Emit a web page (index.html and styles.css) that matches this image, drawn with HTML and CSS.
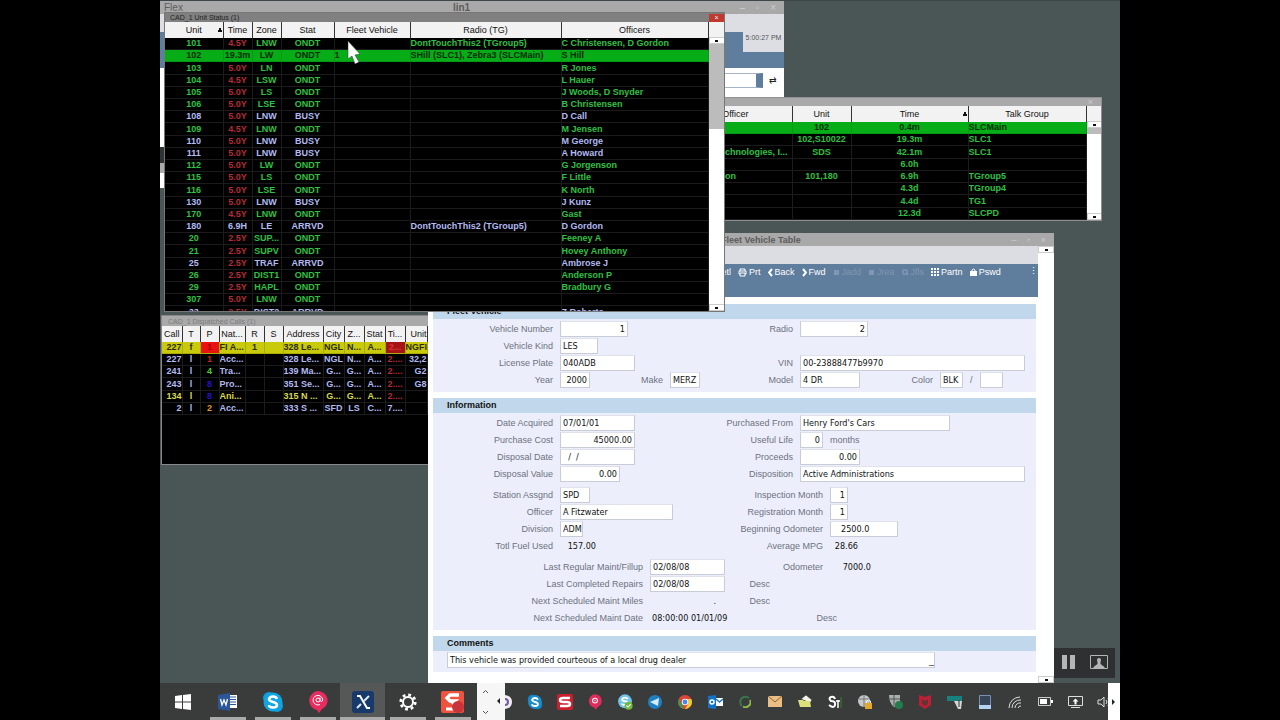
FILE: index.html
```html
<!DOCTYPE html>
<html lang="en">
<head>
    <meta charset="UTF-8">
    <meta name="viewport" content="width=device-width, initial-scale=1.0">
    <title>Flex - Fleet Vehicle Table</title>
    <link rel="stylesheet" href="styles.css">
</head>
<body>
    <div class="screen">
        <main class="desktop">

            <!-- Flex launcher -->
            <section class="window flex-window">
                <div class="titlebar">
                    <span>Flex</span>
                    <strong>lin1</strong>
                    <span class="win-buttons">– ▫ ×</span>
                </div>
                <div class="launcher-top"><span class="clock">5:00:27 PM</span></div>
                <div class="launcher-bar">
                    <select class="command" aria-label="Command"><option></option></select>
                    <span class="refresh">⇄</span>
                </div>
            </section>

            <!-- Radio log -->
            <section class="window radio-window">
                <div class="titlebar"><span class="win-buttons">×</span></div>
                <div class="list">
                    <table class="radio-table">
                        <thead>
                            <tr><th class="w-officer">Officer</th><th class="w-unit">Unit</th><th class="w-time sorted">Time</th><th class="w-group">Talk Group</th></tr>
                        </thead>
                        <tbody>
                            <tr class="selected"><td></td><td>102</td><td>0.4m</td><td class="left">SLCMain</td></tr>
                            <tr><td></td><td>102,S10022</td><td>19.3m</td><td class="left">SLC1</td></tr>
                            <tr><td class="left">chnologies, I...</td><td>SDS</td><td>42.1m</td><td class="left">SLC1</td></tr>
                            <tr><td></td><td></td><td>6.0h</td><td></td></tr>
                            <tr><td class="left">on</td><td>101,180</td><td>6.9h</td><td class="left">TGroup5</td></tr>
                            <tr><td></td><td></td><td>4.3d</td><td class="left">TGroup4</td></tr>
                            <tr><td></td><td></td><td>4.4d</td><td class="left">TG1</td></tr>
                            <tr><td></td><td></td><td>12.3d</td><td class="left">SLCPD</td></tr>
                        </tbody>
                    </table>
                    <div class="scrollbar headed"><i class="arrow up"></i><b class="thumb short"></b><i class="arrow down"></i></div>
                </div>
            </section>

            <!-- Dispatched calls -->
            <section class="window calls-window">
                <div class="titlebar"><span>CAD_1 Dispatched Calls (1)</span></div>
                <div class="list">
                    <table class="calls-table">
                        <thead>
                            <tr><th class="c20">Call</th><th class="c18">T</th><th class="c19">P</th><th class="c26">Nat...</th><th class="c19">R</th><th class="c19">S</th><th class="c40">Address</th><th class="c21">City</th><th class="c20">Z...</th><th class="c21">Stat</th><th class="c20">Ti...</th><th class="c22 right">Unit</th></tr>
                        </thead>
                        <tbody>
                            <tr class="fire"><td class="right">227</td><td>f</td><td class="alarm">1</td><td class="left">FI A...</td><td>1</td><td></td><td class="left">328 Le...</td><td>NGL</td><td>N...</td><td>A...</td><td class="late">2...</td><td class="left">NGFI</td></tr>
                            <tr class="busy"><td class="right">227</td><td>l</td><td class="p1">1</td><td class="left">Acc...</td><td></td><td></td><td class="left">328 Le...</td><td>NGL</td><td>N...</td><td>A...</td><td class="old">2....</td><td class="right">32,2</td></tr>
                            <tr class="busy"><td class="right">241</td><td>l</td><td class="p4">4</td><td class="left">Tra...</td><td></td><td></td><td class="left">139 Ma...</td><td>G...</td><td>G...</td><td>A...</td><td class="old">2....</td><td class="right">G2</td></tr>
                            <tr class="busy"><td class="right">243</td><td>l</td><td class="p8">8</td><td class="left">Pro...</td><td></td><td></td><td class="left">351 Se...</td><td>G...</td><td>G...</td><td>A...</td><td class="old">2....</td><td class="right">G8</td></tr>
                            <tr class="animal"><td class="right">134</td><td>l</td><td class="p8">8</td><td class="left">Ani...</td><td></td><td></td><td class="left">315 N ...</td><td>G...</td><td>G...</td><td>A...</td><td class="old">2....</td><td></td></tr>
                            <tr class="busy"><td class="right">2</td><td>l</td><td class="p2">2</td><td class="left">Acc...</td><td></td><td></td><td class="left">333 S ...</td><td>SFD</td><td>LS</td><td>C...</td><td>7....</td><td></td></tr>
                        </tbody>
                    </table>
                </div>
            </section>

            <!-- Fleet vehicle form -->
            <section class="window fleet-window">
                <div class="titlebar">
                    <strong>Fleet Vehicle Table</strong>
                    <span class="win-buttons">– ▫ ×</span>
                </div>
                <div class="fleet-main">
                    <div class="fleet-page">
                        <div class="menu-strip"></div>
                        <div class="toolbar">
                            <button>Detl</button>
                            <button><svg width="9" height="9" viewBox="0 0 9 9" fill="none" stroke="#fff"><path d="M2 3V1h5v2M2 6H1V3h7v3H7M2 5h5v3H2z"/></svg>Prt</button>
                            <button><svg width="5" height="9" viewBox="0 0 5 9" fill="none" stroke="#fff" stroke-width="2"><path d="M4 1L1 4.500L4 8"/></svg>Back</button>
                            <button><svg width="5" height="9" viewBox="0 0 5 9" fill="none" stroke="#fff" stroke-width="2"><path d="M1 1l3 3.500L1 8"/></svg>Fwd</button>
                            <button disabled><svg width="7" height="7" viewBox="0 0 7 7"><path d="M1 1h5v5H1z"/></svg>Jadd</button>
                            <button disabled><svg width="7" height="7" viewBox="0 0 7 7"><path d="M1 1h5v5H1z"/></svg>Jrea</button>
                            <button disabled><svg width="7" height="7" viewBox="0 0 7 7" fill="none" stroke="#8fa3bb"><path d="M1 1h4v4H1zM5 5l1 1"/></svg>Jfls</button>
                            <button><svg width="8" height="8" viewBox="0 0 8 8" fill="#fff"><path d="M0 0h2v2H0zM3 0h2v2H3zM6 0h2v2H6zM0 3h2v2H0zM3 3h2v2H3zM6 3h2v2H6zM0 6h2v2H0zM3 6h2v2H3zM6 6h2v2H6z"/></svg>Partn</button>
                            <button><svg width="7" height="8" viewBox="0 0 7 8"><path d="M2 4V2q1.500-2 3 0v2" fill="none" stroke="#fff"/><path d="M0 3h7v5H0z" fill="#fff"/></svg>Pswd</button>
                            <span class="more">⋮</span>
                        </div>

                        <form class="form">
                            <fieldset>
                                <h2>Fleet Vehicle</h2>
                                <div class="fields">
                                    <div class="row">
                                        <label for="number">Vehicle Number</label><input id="number" class="w68 num" value="1">
                                    </div>
                                    <div class="row">
                                        <label for="radio">Radio</label><input id="radio" class="w68 num" value="2">
                                    </div>
                                    <div class="row">
                                        <label for="kind">Vehicle Kind</label><input id="kind" class="w38" value="LES">
                                    </div>
                                    <div class="row"></div>
                                    <div class="row">
                                        <label for="plate">License Plate</label><input id="plate" class="w75" value="040ADB">
                                    </div>
                                    <div class="row">
                                        <label for="vin">VIN</label><input id="vin" class="w225" value="00-23888477b9970">
                                    </div>
                                    <div class="row">
                                        <label for="year">Year</label><input id="year" class="w30 num" value="2000">
                                        <label for="make" class="inner">Make</label><input id="make" class="w30" value="MERZ">
                                    </div>
                                    <div class="row">
                                        <label for="model">Model</label><input id="model" class="w60" value="4 DR">
                                        <label for="color" class="inner">Color</label><input id="color" class="w23" value="BLK">
                                        <span class="unit">/</span><input class="w23" aria-label="Second color" value="">
                                    </div>
                                </div>
                            </fieldset>

                            <fieldset>
                                <h2>Information</h2>
                                <div class="fields">
                                    <div class="row">
                                        <label for="acquired">Date Acquired</label><input id="acquired" class="w75" value="07/01/01">
                                    </div>
                                    <div class="row">
                                        <label for="from">Purchased From</label><input id="from" class="w150" value="Henry Ford's Cars">
                                    </div>
                                    <div class="row">
                                        <label for="cost">Purchase Cost</label><input id="cost" class="w75 num" value="45000.00">
                                    </div>
                                    <div class="row">
                                        <label for="life">Useful Life</label><input id="life" class="w23 num" value="0"><span class="unit">months</span>
                                    </div>
                                    <div class="row">
                                        <label for="disposal">Disposal Date</label><input id="disposal" class="w75" value="  /  /">
                                    </div>
                                    <div class="row">
                                        <label for="proceeds">Proceeds</label><input id="proceeds" class="w60 num" value="0.00">
                                    </div>
                                    <div class="row">
                                        <label for="dvalue">Disposal Value</label><input id="dvalue" class="w60 num" value="0.00">
                                    </div>
                                    <div class="row">
                                        <label for="disposition">Disposition</label><input id="disposition" class="w225" value="Active Administrations">
                                    </div>
                                </div>
                                <div class="fields months">
                                    <div class="row">
                                        <label for="station">Station Assgnd</label><input id="station" class="w30" value="SPD">
                                    </div>
                                    <div class="row">
                                        <label for="inspection">Inspection Month</label><input id="inspection" class="w18 num" value="1">
                                    </div>
                                    <div class="row">
                                        <label for="officer">Officer</label><input id="officer" class="w113" value="A Fitzwater">
                                    </div>
                                    <div class="row">
                                        <label for="registration">Registration Month</label><input id="registration" class="w18 num" value="1">
                                    </div>
                                    <div class="row">
                                        <label for="division">Division</label><input id="division" class="w23" value="ADM">
                                    </div>
                                    <div class="row">
                                        <label for="begin">Beginning Odometer</label><input id="begin" class="w68 indent" value="2500.0">
                                    </div>
                                    <div class="row">
                                        <label for="fuel">Totl Fuel Used</label><output id="fuel" class="w38 num">157.00</output>
                                    </div>
                                    <div class="row">
                                        <label for="mpg">Average MPG</label><output id="mpg" class="w30 num">28.66</output>
                                    </div>
                                </div>
                                <div class="fields maint">
                                    <div class="row">
                                        <label for="fillup">Last Regular Maint/Fillup</label><input id="fillup" class="w75" value="02/08/08">
                                    </div>
                                    <div class="row">
                                        <label for="odometer">Odometer</label><output id="odometer" class="w43 num">7000.0</output>
                                    </div>
                                    <div class="row">
                                        <label for="repairs">Last Completed Repairs</label><input id="repairs" class="w75" value="02/08/08">
                                    </div>
                                    <div class="row desc"><label>Desc</label></div>
                                    <div class="row">
                                        <label for="miles">Next Scheduled Maint Miles</label><output id="miles" class="w68 num">.</output>
                                    </div>
                                    <div class="row desc"><label>Desc</label></div>
                                    <div class="row">
                                        <label for="next">Next Scheduled Maint Date</label><output id="next">08:00:00 01/01/09</output>
                                    </div>
                                    <div class="row desc-far"><label>Desc</label></div>
                                </div>
                            </fieldset>

                            <fieldset>
                                <h2>Comments</h2>
                                <div class="comment">
                                    <input aria-label="Comments" value="This vehicle was provided courteous of a local drug dealer">
                                    <span>_</span>
                                </div>
                            </fieldset>
                        </form>
                    </div>
                    <div class="scrollbar"><i class="arrow up"></i><i class="arrow down"></i></div>
                </div>
            </section>

            <!-- Unit status -->
            <section class="window unit-window">
                <div class="titlebar"><span>CAD_1 Unit Status (1)</span><button class="close" aria-label="Close">×</button></div>
                <div class="list">
                    <table class="unit-table">
                        <thead>
                            <tr><th class="u-unit sorted">Unit</th><th class="u-time">Time</th><th class="u-zone">Zone</th><th class="u-stat">Stat</th><th class="u-fleet">Fleet Vehicle</th><th class="u-radio">Radio (TG)</th><th class="u-officers">Officers</th></tr>
                        </thead>
                        <tbody>
                            <tr><td>101</td><td class="old">4.5Y</td><td>LNW</td><td>ONDT</td><td></td><td class="left">DontTouchThis2 (TGroup5)</td><td class="left">C Christensen, D Gordon</td></tr>
                            <tr class="selected"><td>102</td><td>19.3m</td><td>LW</td><td>ONDT</td><td class="left">1</td><td class="left">SHill (SLC1), Zebra3 (SLCMain)</td><td class="left">S Hill</td></tr>
                            <tr><td>103</td><td class="old">5.0Y</td><td>LN</td><td>ONDT</td><td></td><td></td><td class="left">R Jones</td></tr>
                            <tr><td>104</td><td class="old">4.5Y</td><td>LSW</td><td>ONDT</td><td></td><td></td><td class="left">L Hauer</td></tr>
                            <tr><td>105</td><td class="old">5.0Y</td><td>LS</td><td>ONDT</td><td></td><td></td><td class="left">J Woods, D Snyder</td></tr>
                            <tr><td>106</td><td class="old">5.0Y</td><td>LSE</td><td>ONDT</td><td></td><td></td><td class="left">B Christensen</td></tr>
                            <tr class="busy"><td>108</td><td class="old">5.0Y</td><td>LNW</td><td>BUSY</td><td></td><td></td><td class="left">D Call</td></tr>
                            <tr><td>109</td><td class="old">4.5Y</td><td>LNW</td><td>ONDT</td><td></td><td></td><td class="left">M Jensen</td></tr>
                            <tr class="busy"><td>110</td><td class="old">5.0Y</td><td>LNW</td><td>BUSY</td><td></td><td></td><td class="left">M George</td></tr>
                            <tr class="busy"><td>111</td><td class="old">5.0Y</td><td>LNW</td><td>BUSY</td><td></td><td></td><td class="left">A Howard</td></tr>
                            <tr><td>112</td><td class="old">5.0Y</td><td>LW</td><td>ONDT</td><td></td><td></td><td class="left">G Jorgenson</td></tr>
                            <tr><td>115</td><td class="old">5.0Y</td><td>LS</td><td>ONDT</td><td></td><td></td><td class="left">F Little</td></tr>
                            <tr><td>116</td><td class="old">5.0Y</td><td>LSE</td><td>ONDT</td><td></td><td></td><td class="left">K North</td></tr>
                            <tr class="busy"><td>130</td><td class="old">5.0Y</td><td>LNW</td><td>BUSY</td><td></td><td></td><td class="left">J Kunz</td></tr>
                            <tr><td>170</td><td class="old">4.5Y</td><td>LNW</td><td>ONDT</td><td></td><td></td><td class="left">Gast</td></tr>
                            <tr class="busy"><td>180</td><td>6.9H</td><td>LE</td><td>ARRVD</td><td></td><td class="left">DontTouchThis2 (TGroup5)</td><td class="left">D Gordon</td></tr>
                            <tr><td>20</td><td class="old">2.5Y</td><td>SUP...</td><td>ONDT</td><td></td><td></td><td class="left">Feeney A</td></tr>
                            <tr><td>21</td><td class="old">2.5Y</td><td>SUPV</td><td>ONDT</td><td></td><td></td><td class="left">Hovey Anthony</td></tr>
                            <tr class="busy"><td>25</td><td class="old">2.5Y</td><td>TRAF</td><td>ARRVD</td><td></td><td></td><td class="left">Ambrose J</td></tr>
                            <tr><td>26</td><td class="old">2.5Y</td><td>DIST1</td><td>ONDT</td><td></td><td></td><td class="left">Anderson P</td></tr>
                            <tr><td>29</td><td class="old">2.5Y</td><td>HAPL</td><td>ONDT</td><td></td><td></td><td class="left">Bradbury G</td></tr>
                            <tr><td>307</td><td class="old">5.0Y</td><td>LNW</td><td>ONDT</td><td></td><td></td><td></td></tr>
                            <tr class="busy"><td>33</td><td class="old">2.5Y</td><td>DIST2</td><td>ARRVD</td><td></td><td></td><td class="left">Z Roberts</td></tr>
                        </tbody>
                    </table>
                    <div class="scrollbar headed"><i class="arrow up"></i><b class="thumb"></b><i class="arrow down"></i></div>
                </div>
            </section>

            <svg class="cursor" width="14" height="24" viewBox="0 0 14 24"><path d="M1 0v18l4-3 3 8 4-2-4-7 5-1z" fill="#fff" stroke="#333" stroke-width=".5"/></svg>

            <div class="recorder">
                <button aria-label="Pause"><svg width="14" height="14" viewBox="0 0 14 14" fill="#b5b5b5"><path d="M0 0h5v14H0zM8 0h5v14H8z"/></svg></button>
                <button aria-label="Presenter"><svg width="18" height="14" viewBox="0 0 18 14"><path d="M.5.5h17v13H.5z" fill="none" stroke="#b5b5b5"/><circle cx="9" cy="5" r="2" fill="#b5b5b5"/><path d="M7.500 5h3v4l4 3v1h-11v-1l4-3z" fill="#b5b5b5"/></svg></button>
            </div>
        </main>

        <footer class="taskbar">
            <nav class="apps">
                <button aria-label="Start"><svg width="16" height="16" viewBox="0 0 16 16" fill="#fff"><path d="M0 2l7-1v6.500H0zM8 1l8-1v7.500H8zM0 8.500h7V15l-7-1zM8 8.500h8V16l-8-1z"/></svg></button>
                <button class="open" aria-label="Word"><svg width="20" height="18" viewBox="0 0 20 18"><path d="M10 2h9v13h-9z" fill="#fff"/><path d="M12 4h6M12 6.500h6M12 9h6M12 11.500h6" stroke="#2b579a"/><path d="M0 2l12-2v18L0 16z" fill="#2b579a"/><path d="M2.500 6l1.500 6 2-5 2 5 1.500-6" fill="none" stroke="#fff" stroke-width="1.300"/></svg></button>
                <button class="open" aria-label="Skype"><svg width="22" height="22" viewBox="0 0 22 22"><circle cx="7" cy="7" r="6" fill="#0d9ddb"/><circle cx="15" cy="15" r="6" fill="#0d9ddb"/><circle cx="11" cy="11" r="9.500" fill="#12a5e3"/><path d="M15 8q-1-2.500-4-2.500T7 8q0 2 4 3t4 3q0 2.500-4 2.500T7 14" fill="none" stroke="#fff" stroke-width="2.500"/></svg></button>
                <button class="open" aria-label="Messages"><svg width="20" height="22" viewBox="0 0 20 22"><path d="M10 0a10 9.500 0 0 1 4 18l-3 4-2-3a9.600 9.600 0 0 1 1-19z" fill="#e92c60"/><circle cx="10" cy="9" r="2" fill="none" stroke="#fff"/><path d="M12 6.500v3q2 2.500 2.700-.5A4.800 4.800 0 1 0 12 13.500" fill="none" stroke="#fff"/></svg></button>
                <button class="open active" aria-label="Flex"><svg width="22" height="22" viewBox="0 0 22 22"><rect width="22" height="22" rx="3" fill="#173a6b"/><path d="M5 5h3l7 12h3" fill="none" stroke="#fff" stroke-width="2"/><path d="M17 5l-5 5M9 13l-4 4" stroke="#dfe8f2" stroke-width="2"/></svg></button>
                <button class="open" aria-label="Settings"><svg width="18" height="18" viewBox="0 0 18 18" fill="none" stroke="#fff"><circle cx="9" cy="9" r="5" stroke-width="2"/><circle cx="9" cy="9" r="7.200" stroke-width="2.800" stroke-dasharray="2.830 2.825"/></svg></button>
                <button class="open" aria-label="Recorder"><svg width="24" height="22" viewBox="0 0 24 22"><rect width="23" height="22" rx="2" fill="#ee5340"/><path d="M18 4H9L6 7l3 3h5l-3 3" fill="none" stroke="#fff" stroke-width="3.500"/><path d="M5 18h7" stroke="#fff" stroke-width="3"/><circle cx="17" cy="16" r="6" fill="#c9343a"/></svg></button>
            </nav>
            <div class="spinner">
                <svg width="28" height="37" viewBox="0 0 28 37" fill="none" stroke="#555"><path d="M6 10l2.500-2.500L11 10M6 28l2.500 2.500L11 28"/><path d="M23 15v6l-3-3z" fill="#222" stroke="none"/></svg>
            </div>
            <div class="tray">
                <span class="half"><svg width="8" height="16" viewBox="0 0 8 16"><path d="M0 1q7 1 7 7t-7 7z" fill="#eee"/><path d="M0 5q3 0 3 3t-3 3" fill="none" stroke="#7758a5" stroke-width="2"/></svg></span>
                <span><svg width="16" height="16" viewBox="0 0 22 22"><circle cx="7" cy="7" r="6" fill="#1280c4"/><circle cx="15" cy="15" r="6" fill="#1280c4"/><circle cx="11" cy="11" r="9.500" fill="#1a8dcc"/><path d="M15 8q-1-2.500-4-2.500T7 8q0 2 4 3t4 3q0 2.500-4 2.500T7 14" fill="none" stroke="#fff" stroke-width="2.500"/></svg></span>
                <span><svg width="16" height="16" viewBox="0 0 16 16"><rect width="16" height="16" rx="2" fill="#c8202f"/><path d="M13 4H6Q3 4 3 6t3 2h4q3 0 3 2t-3 2H3" fill="none" stroke="#fff" stroke-width="2.500"/></svg></span>
                <span><svg width="14" height="16" viewBox="0 0 20 22"><path d="M10 0a10 9.500 0 0 1 4 18l-3 4-2-3a9.600 9.600 0 0 1 1-19z" fill="#e02c5c"/><circle cx="10" cy="9" r="3.500" fill="none" stroke="#fff" stroke-width="1.500"/><circle cx="10" cy="9" r="1" fill="#fff"/></svg></span>
                <span><svg width="16" height="16" viewBox="0 0 22 22"><circle cx="11" cy="10" r="9.500" fill="#6fc5ea"/><path d="M15 7q-1-2-4-2T7 7.500q0 2 4 2.500t4 3q0 2-4 2t-4-2" fill="none" stroke="#fff" stroke-width="2.500"/><circle cx="16" cy="16" r="5.500" fill="#72b83d"/><path d="M13 16l2 2 4-4" fill="none" stroke="#fff" stroke-width="1.500"/></svg></span>
                <span><svg width="14" height="14" viewBox="0 0 14 14"><circle cx="7" cy="7" r="7" fill="#1e7fc2"/><path d="M2 7l9-4-1 8z" fill="#d5eafa"/></svg></span>
                <span><svg width="14" height="14" viewBox="0 0 14 14"><circle cx="7" cy="7" r="7" fill="#dd4538"/><path d="M1 4l5 10A7 7 0 0 1 1 4z" fill="#31a14f"/><path d="M7 4h6.300A7 7 0 0 1 7 14l3-5z" fill="#f6c92e"/><circle cx="7" cy="7" r="3.200" fill="#fff"/><circle cx="7" cy="7" r="2.400" fill="#4285f4"/></svg></span>
                <span><svg width="15" height="14" viewBox="0 0 15 14"><path d="M7 3h8v8H7z" fill="#fff"/><path d="M8 4l3.500 3L15 4" fill="none" stroke="#1979ca" stroke-width="1.500"/><path d="M0 1l8-1v14l-8-1z" fill="#1272c4"/><circle cx="4" cy="7" r="2" fill="none" stroke="#fff" stroke-width="1.500"/></svg></span>
                <span><svg width="12" height="13" viewBox="0 0 12 13" fill="none" stroke-width="2"><path d="M10 3A5 5 0 1 0 3 11" stroke="#39774b"/><path d="M4 11.500A5 5 0 0 0 11 5" stroke="#8eb84a"/></svg></span>
                <span><svg width="14" height="11" viewBox="0 0 14 11"><path d="M0 0h14v11H0z" fill="#e9bd83"/><path d="M0 0l7 6 7-6" fill="none" stroke="#8c6435"/></svg></span>
                <span><svg width="15" height="13" viewBox="0 0 15 13"><path d="M3 4l5-4 6 5-2 3z" fill="#f2f2e6" stroke="#222" stroke-width=".5"/><path d="M0 5h5l1 1h6l1 6H2z" fill="#dce07a"/></svg></span>
                <span><svg width="14" height="15" viewBox="0 0 14 15" fill="none"><path d="M7 5q-1-3-4-2T3 7q5 0 4 4t-6 0" stroke="#fff" stroke-width="2"/><path d="M10 6v8M8 7h4" stroke="#fff" stroke-width="1.500"/><path d="M13 3v11" stroke="#387d32"/></svg></span>
                <span><svg width="14" height="14" viewBox="0 0 14 14"><circle cx="6" cy="6" r="6" fill="#c5c8c8"/><path d="M6 0v12M1 4h10" stroke="#777"/><path d="M7 8h7v6H7z" fill="#e2a82c"/><path d="M8.500 8V6q2-2 4 0v2" fill="none" stroke="#eee"/></svg></span>
                <span><svg width="15" height="15" viewBox="0 0 15 15"><path d="M1 1h11v7q-2 4-6 5Q1 9 1 1z" fill="#aab0ae"/><path d="M6 1v11M1 5h11" stroke="#555"/><circle cx="11" cy="11" r="4" fill="#237c4c"/></svg></span>
                <span><svg width="14" height="15" viewBox="0 0 14 15"><path d="M1 1l6 2 6-2v10l-6 4-6-4z" fill="#bf1f34"/><path d="M4 5l3 2 3-2v5l-3 2-3-2z" fill="#633"/></svg></span>
                <span><svg width="16" height="14" viewBox="0 0 16 14"><path d="M0 1h15v5H0z" fill="#16817d"/><path d="M7 6h8l-1 8h-3z" fill="#d4d8d8"/><path d="M12 5v7" stroke="#333"/></svg></span>
                <span><svg width="12" height="14" viewBox="0 0 12 14"><path d="M.5.5h11v13H.5z" fill="#39465a" stroke="#7891b1"/><path d="M0 10h12v4H0z" fill="#b6d2f3"/></svg></span>
                <span><svg width="14" height="14" viewBox="0 0 14 14" fill="none" stroke="#ddd"><path d="M1 13A11 11 0 0 1 12 2M4 13a8 8 0 0 1 9-8M7 13a5 5 0 0 1 6-5M10 13a3 3 0 0 1 3-2"/></svg></span>
                <span><svg width="15" height="9" viewBox="0 0 15 9"><path d="M.5.5h12v8H.5z" fill="none" stroke="#ccc"/><path d="M2 2h7v5H2zM13 3h2v3h-2z" fill="#fff"/></svg></span>
                <span><svg width="15" height="12" viewBox="0 0 15 12"><path d="M.5.5h14v9H.5zM3 11.500h9" fill="none" stroke="#ddd"/><path d="M7.500 2.500l3 3h-2v3h-2v-3h-2z" fill="#fff"/></svg></span>
                <span><svg width="16" height="12" viewBox="0 0 16 12" fill="none" stroke="#ddd"><path d="M1 4h3l3-3v10L4 8H1zM9 4q2 2 0 4M11 2q3 4 0 8"/></svg></span>
            </div>
            <div class="tray-end"><svg width="5" height="8" viewBox="0 0 5 8"><path d="M1 1v6l3-3z" fill="#222"/></svg></div>
        </footer>
    </div>
</body>
</html>
```

FILE: styles.css
```css
* {
    box-sizing: border-box;
}
body {
    margin: 0;
    background-color: #000;
    font-family: "Liberation Sans", Arial, sans-serif;
    font-size: 9px;
    color: #222;
}
button {
    font: inherit;
    border: none;
    background: none;
    padding: 0;
}
.screen {
    display: flex;
    flex-direction: column;
    width: 75%;
    min-height: 100vh;
    margin: 0 auto;
    overflow: hidden;
}
.desktop {
    position: relative;
    flex: 1;
    background-color: #4a5556;
    border-top: 1px solid #3e4748;
}

/* windows */
.window {
    position: absolute;
    overflow: hidden;
}
.titlebar {
    display: flex;
    align-items: center;
    background-color: #a9a9a9;
    color: #5c5c5c;
}
.win-buttons {
    margin-left: auto;
    padding-right: 8px;
    color: #ccc;
    word-spacing: 8px;
}
.flex-window {
    left: 0;
    top: 0;
    width: 624px;
    height: 187px;
    background: linear-gradient(#fff 146px, #2d3435 146px, #2d3435 162px, #aaa 162px, #aaa 172px, #fff 172px);
}
.flex-window .titlebar {
    height: 13px;
    padding-left: 4px;
    font-size: 10px;
}
.flex-window .titlebar strong {
    margin-left: 270px;
}
.launcher-top {
    display: flex;
    justify-content: flex-end;
    height: 54px;
    background: linear-gradient(#dcdee4 18px, #5f7d9d 18px);
}
.clock {
    width: 41px;
    height: 38px;
    padding-top: 20px;
    background-color: #dcdee4;
    color: #555;
    font-size: 7px;
    text-align: center;
    white-space: nowrap;
}
.launcher-bar {
    display: flex;
    align-items: center;
    justify-content: flex-end;
    gap: 6px;
    height: 24px;
    padding-right: 7px;
}
.command {
    appearance: none;
    width: 60px;
    height: 15px;
    border: 1px solid #a5b4c8;
    border-right: 7px solid #5f7d9d;
    border-radius: 0;
    background-color: #fff;
}
.radio-window {
    left: 540px;
    top: 96px;
    width: 402px;
    height: 124px;
    border: 1px solid #909090;
    background-color: #000;
}
.radio-window .titlebar {
    height: 8px;
}
.calls-window {
    left: 1px;
    top: 314px;
    width: 400px;
    height: 150px;
    border: 1px solid #888;
    background-color: #000;
}
.calls-window .titlebar {
    height: 10px;
    padding-left: 6px;
    font-size: 7px;
    color: #7c7c7c;
}
.fleet-window {
    left: 268px;
    top: 232px;
    width: 626px;
    bottom: 0;
    background-color: #fff;
}
.fleet-window .titlebar {
    height: 13px;
    padding-left: 293px;
    font-size: 9px;
    color: #5c5c5c;
}
.unit-window {
    left: 4px;
    top: 11px;
    width: 561px;
    height: 300px;
    border: 1px solid #777;
    background-color: #000;
}
.unit-window .titlebar {
    justify-content: space-between;
    height: 9px;
    padding-left: 5px;
    background-color: #808080;
    color: #222;
    font-size: 7px;
}
.close {
    width: 15px;
    height: 8px;
    background-color: #c0392f;
    color: #fff;
    line-height: 8px;
}

/* lists */
.list {
    display: flex;
    align-items: flex-start;
}
table {
    flex: none;
    table-layout: fixed;
    border-collapse: collapse;
    font-size: 9px;
    font-weight: bold;
    line-height: 11px;
    color: #2fc046;
    background-color: #000;
}
th, td {
    padding: 0;
    text-align: center;
    white-space: nowrap;
    overflow: hidden;
}
th {
    height: 16px;
    border-right: 1px solid #333;
    background-color: #f2f2f2;
    color: #111;
    font-weight: normal;
}
td {
    border: 1px solid #1b1b1b;
    border-width: 0 1px 1px 0;
}
.left {
    text-align: left;
}
.right {
    text-align: right;
}
.sorted {
    background-image: linear-gradient(#111, #111), linear-gradient(#111, #111);
    background-size: 2px 2px, 4px 2px;
    background-position: right 2px top 6px, right 1px top 8px;
    background-repeat: no-repeat;
}
.selected td {
    background-color: #06ad17;
    border-color: #069a14;
    color: #042c07;
}
.busy {
    color: #b2baf2;
}
.old {
    color: #b52c38;
}
.unit-table {
    width: 543px;
    height: 297px;
}
.u-unit { width: 58px; }
.u-time { width: 29px; }
.u-zone { width: 29px; }
.u-stat { width: 53px; }
.u-fleet { width: 76px; }
.u-radio { width: 151px; }
.u-officers { width: 147px; }

.radio-table {
    width: 385px;
    height: 114px;
}
.w-officer { width: 91px; }
.w-unit { width: 59px; }
.w-time { width: 117px; }
.w-group { width: 118px; }
.radio-table th.w-officer {
    padding-right: 43px;
    text-align: right;
}
.radio-table td:first-child {
    padding-left: 24px;
}

.calls-table {
    width: 265px;
    height: 89px;
}
.c18 { width: 18px; }
.c19 { width: 19px; }
.c20 { width: 20px; }
.c21 { width: 21px; }
.c22 { width: 22px; }
.c26 { width: 26px; }
.c40 { width: 40px; }
.fire td {
    background-color: #c9cb0a;
    border-color: #a9ab08;
    color: #2b2b06;
}
.fire .alarm {
    background-color: #ea1111;
    color: #a00;
}
.fire .late {
    background-color: #a51515;
    color: #d33;
}
.animal { color: #d8da4c; }
.p1 { color: #d02020; }
.p2 { color: #e09030; }
.p4 { color: #4fd02f; }
.p8 { color: #2412c8; }

/* scrollbars */
.scrollbar {
    display: flex;
    flex-direction: column;
    align-self: stretch;
    width: 16px;
    flex: none;
    background-color: #fff;
}
.headed {
    border-top: 15px solid #f2f2f2;
}
.arrow {
    height: 7px;
    border: 1px solid #ccc;
    background: linear-gradient(#111, #111) center / 3px 2px no-repeat #fff;
}
.down {
    margin-top: auto;
}
.thumb {
    height: 85px;
    background-color: #bcbcbc;
}
.short {
    height: 6px;
}
.unit-window .scrollbar {
    height: 289px;
}

/* fleet form */
.fleet-main {
    display: flex;
    height: calc(100% - 13px);
}
.fleet-page {
    flex: 1;
}
.menu-strip {
    height: 18px;
    background-color: #dcdde2;
}
.toolbar {
    display: flex;
    align-items: flex-start;
    gap: 7px;
    height: 33px;
    padding: 2px 0 0 287px;
    background-color: #5f7d9d;
}
.toolbar button {
    display: flex;
    align-items: center;
    gap: 2px;
    height: 12px;
    color: #fff;
}
.toolbar button:disabled {
    color: #8196b0;
    fill: #8196b0;
}
.more {
    margin-left: auto;
    color: #fff;
}
.form {
    padding: 7px 2px 0 5px;
}
fieldset {
    min-width: 0;
    margin: 0 0 6px;
    padding: 0 0 4px;
    border: none;
    background-color: #eceffb;
}
h2 {
    height: 15px;
    margin: 0 0 1px;
    padding-left: 14px;
    background-color: #c1d8ec;
    color: #111;
    font-size: 9px;
    line-height: 15px;
}
.fields {
    display: grid;
    grid-template-columns: 240px 1fr;
    grid-auto-rows: 17px;
    margin-bottom: 4px;
}
.fields:last-child {
    margin-bottom: 0;
}
.row {
    display: flex;
    align-items: center;
    gap: 7px;
    white-space: nowrap;
}
.row > * {
    flex: none;
}
label, .unit {
    color: #6d717e;
}
.row label {
    width: 120px;
    text-align: right;
}
.row label.inner {
    width: 66px;
}
.months .row:nth-child(even) label {
    width: 150px;
}
.maint {
    grid-template-columns: 300px 1fr;
}
.maint .row label {
    width: 210px;
}
.maint .row:nth-child(even) label {
    width: 90px;
}
.maint .desc:nth-child(even) label {
    width: 37px;
}
.maint .desc-far:nth-child(even) label {
    width: 104px;
}
input, output {
    height: 16px;
    padding: 0 2px;
    font-family: "DejaVu Sans Condensed", "DejaVu Sans", sans-serif;
    font-size: 9px;
    line-height: 16px;
    color: #111;
}
input {
    border: 1px solid #c8ccd6;
    border-top-color: #dfe2ea;
    background-color: #fff;
}
.num { text-align: right; }
.indent { padding-left: 10px; }
.w18 { width: 18px; }
.w23 { width: 23px; }
.w30 { width: 30px; }
.w38 { width: 38px; }
.w43 { width: 43px; }
.w60 { width: 60px; }
.w68 { width: 68px; }
.w75 { width: 75px; }
.w113 { width: 113px; }
.w150 { width: 150px; }
.w225 { width: 225px; }
.w23, .w30 { padding: 0 0 0 2px; }
.w23.num, .w30.num { padding: 0 2px 0 0; }
.comment {
    position: relative;
    width: 488px;
    margin-left: 14px;
}
.comment input {
    display: block;
    width: 100%;
}
.comment span {
    position: absolute;
    right: 1px;
    bottom: 2px;
}

/* overlays */
.cursor {
    position: absolute;
    left: 187px;
    top: 40px;
}
.recorder {
    position: absolute;
    right: 5px;
    bottom: 5px;
    display: flex;
    align-items: center;
    justify-content: center;
    gap: 14px;
    width: 61px;
    height: 30px;
    background-color: #2e3031;
}

/* taskbar */
.taskbar {
    display: flex;
    height: 37px;
    background-color: #3a3b3b;
}
.apps {
    display: flex;
}
.apps button {
    display: flex;
    align-items: center;
    justify-content: center;
    width: 45px;
    background: linear-gradient(#aaa, #aaa) center bottom / 0 3px no-repeat;
}
.apps .open {
    background-size: 36px 3px;
}
.apps .active {
    background-color: #555857;
    background-size: 45px 3px;
}
.spinner {
    width: 28px;
    margin-left: 2px;
    background-color: #f6f6f6;
}
.tray {
    display: flex;
    flex: 1;
    overflow: hidden;
}
.tray span {
    display: flex;
    flex: none;
    align-items: center;
    justify-content: center;
    width: 30px;
}
.tray .half {
    justify-content: flex-start;
    width: 15px;
}
.tray-end {
    display: flex;
    align-items: center;
    width: 12px;
    padding-left: 3px;
    background-color: #fff;
}
```
